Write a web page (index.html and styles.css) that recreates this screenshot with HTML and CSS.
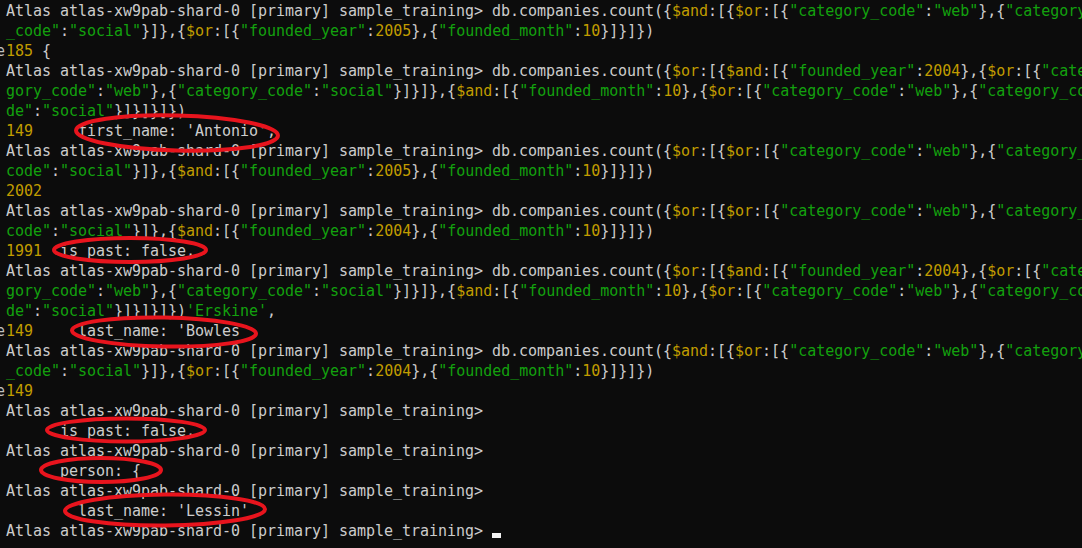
FILE: index.html
```html
<!DOCTYPE html>
<html>
<head>
<meta charset="utf-8">
<link rel="stylesheet" href="styles.css">
</head>
<body>
<div class="terminal">
<div class="line">Atlas atlas-xw9pab-shard-0 [primary] sample_training&gt; db.companies.count({<span class="y">$and</span>:[{<span class="y">$or</span>:[{<span class="g">"category_code"</span>:<span class="g">"web"</span>},{<span class="g">"category</span></div>
<div class="line"><span class="g">_code"</span>:<span class="g">"social"</span>}]},{<span class="y">$or</span>:[{<span class="g">"founded_year"</span>:<span class="y">2005</span>},{<span class="g">"founded_month"</span>:<span class="y">10</span>}]}]})</div>
<div class="line"><span class="edge">e</span><span class="y">185</span> {</div>
<div class="line">Atlas atlas-xw9pab-shard-0 [primary] sample_training&gt; db.companies.count({<span class="y">$or</span>:[{<span class="y">$and</span>:[{<span class="g">"founded_year"</span>:<span class="y">2004</span>},{<span class="y">$or</span>:[{<span class="g">"cate</span></div>
<div class="line"><span class="g">gory_code"</span>:<span class="g">"web"</span>},{<span class="g">"category_code"</span>:<span class="g">"social"</span>}]}]},{<span class="y">$and</span>:[{<span class="g">"founded_month"</span>:<span class="y">10</span>},{<span class="y">$or</span>:[{<span class="g">"category_code"</span>:<span class="g">"web"</span>},{<span class="g">"category_co</span></div>
<div class="line"><span class="g">de"</span>:<span class="g">"social"</span>}]}]}]})</div>
<div class="line"><span class="y">149</span>     first_name: 'Antonio',</div>
<div class="line">Atlas atlas-xw9pab-shard-0 [primary] sample_training&gt; db.companies.count({<span class="y">$or</span>:[{<span class="y">$or</span>:[{<span class="g">"category_code"</span>:<span class="g">"web"</span>},{<span class="g">"category_</span></div>
<div class="line"><span class="g">code"</span>:<span class="g">"social"</span>}]},{<span class="y">$and</span>:[{<span class="g">"founded_year"</span>:<span class="y">2005</span>},{<span class="g">"founded_month"</span>:<span class="y">10</span>}]}]})</div>
<div class="line"><span class="y">2002</span></div>
<div class="line">Atlas atlas-xw9pab-shard-0 [primary] sample_training&gt; db.companies.count({<span class="y">$or</span>:[{<span class="y">$or</span>:[{<span class="g">"category_code"</span>:<span class="g">"web"</span>},{<span class="g">"category_</span></div>
<div class="line"><span class="g">code"</span>:<span class="g">"social"</span>}]},{<span class="y">$and</span>:[{<span class="g">"founded_year"</span>:<span class="y">2004</span>},{<span class="g">"founded_month"</span>:<span class="y">10</span>}]}]})</div>
<div class="line"><span class="y">1991</span>  is_past: false,</div>
<div class="line">Atlas atlas-xw9pab-shard-0 [primary] sample_training&gt; db.companies.count({<span class="y">$or</span>:[{<span class="y">$and</span>:[{<span class="g">"founded_year"</span>:<span class="y">2004</span>},{<span class="y">$or</span>:[{<span class="g">"cate</span></div>
<div class="line"><span class="g">gory_code"</span>:<span class="g">"web"</span>},{<span class="g">"category_code"</span>:<span class="g">"social"</span>}]}]},{<span class="y">$and</span>:[{<span class="g">"founded_month"</span>:<span class="y">10</span>},{<span class="y">$or</span>:[{<span class="g">"category_code"</span>:<span class="g">"web"</span>},{<span class="g">"category_co</span></div>
<div class="line"><span class="g">de"</span>:<span class="g">"social"</span>}]}]}]})<span class="g">'Erskine'</span>,</div>
<div class="line"><span class="edge">e</span><span class="y">149</span>     last_name: 'Bowles</div>
<div class="line">Atlas atlas-xw9pab-shard-0 [primary] sample_training&gt; db.companies.count({<span class="y">$and</span>:[{<span class="y">$or</span>:[{<span class="g">"category_code"</span>:<span class="g">"web"</span>},{<span class="g">"category</span></div>
<div class="line"><span class="g">_code"</span>:<span class="g">"social"</span>}]},{<span class="y">$or</span>:[{<span class="g">"founded_year"</span>:<span class="y">2004</span>},{<span class="g">"founded_month"</span>:<span class="y">10</span>}]}]})</div>
<div class="line"><span class="edge">e</span><span class="y">149</span></div>
<div class="line">Atlas atlas-xw9pab-shard-0 [primary] sample_training&gt;</div>
<div class="line">      is_past: false,</div>
<div class="line">Atlas atlas-xw9pab-shard-0 [primary] sample_training&gt;</div>
<div class="line">      person: {</div>
<div class="line">Atlas atlas-xw9pab-shard-0 [primary] sample_training&gt;</div>
<div class="line">        last_name: 'Lessin'</div>
<div class="line">Atlas atlas-xw9pab-shard-0 [primary] sample_training&gt; <span class="cursor"></span></div>
</div>
<svg class="marks" width="1082" height="548" viewBox="0 0 1082 548">
  <ellipse cx="177" cy="133" rx="101" ry="17.5" transform="rotate(1.5 177 133)"/>
  <ellipse cx="130" cy="250" rx="76" ry="12"/>
  <ellipse cx="164" cy="332" rx="92" ry="14.5" transform="rotate(1 164 332)"/>
  <ellipse cx="126" cy="430" rx="79" ry="11.5"/>
  <ellipse cx="101" cy="470" rx="60" ry="12"/>
  <ellipse cx="165" cy="510" rx="100" ry="15.5" transform="rotate(-0.5 165 510)"/>
</svg>
</body>
</html>
```
FILE: styles.css
```css
html, body {
  margin: 0;
  padding: 0;
  background: #0c0c0c;
  width: 1082px;
  height: 548px;
  overflow: hidden;
}

body {
  position: relative;
}

.terminal {
  display: flex;
  flex-direction: column;
  padding: 1px 0 0 6px;
  font-family: "DejaVu Sans Mono", "Liberation Mono", monospace;
  font-size: 15px;
  letter-spacing: -0.03px;
  line-height: 20px;
  color: #cccccc;
}

.line {
  height: 20px;
  white-space: pre;
  overflow: visible;
}

.g {
  color: #13a10e;
}

.y {
  color: #c19c00;
}

.edge {
  margin-left: -10px;
  margin-right: 1px;
  color: #bfbfbf;
}

.cursor {
  display: inline-block;
  width: 9px;
  height: 5px;
  background: #f2f2f2;
  vertical-align: -2px;
}

.marks {
  position: absolute;
  left: 0;
  top: 0;
  pointer-events: none;
}

.marks ellipse {
  fill: none;
  stroke: #e8141d;
  stroke-width: 4;
}
```
